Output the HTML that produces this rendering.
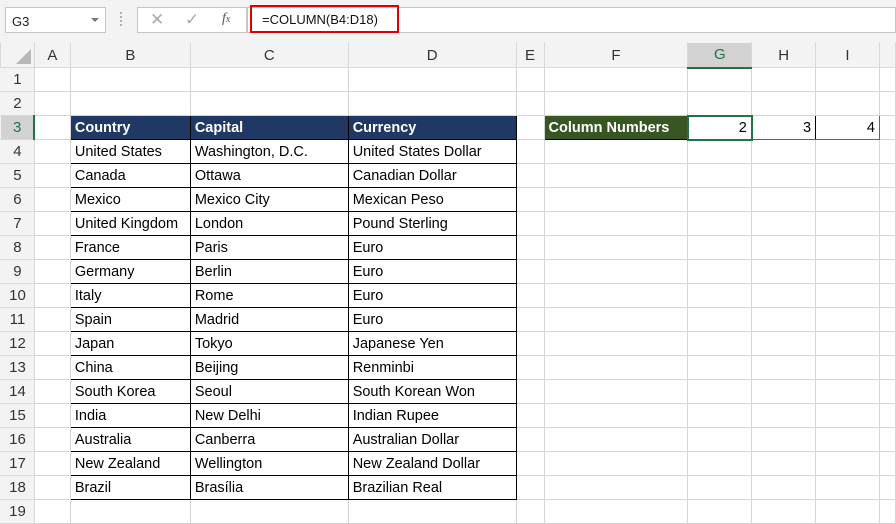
<!DOCTYPE html>
<html><head><meta charset="utf-8"><style>
*{box-sizing:border-box;margin:0;padding:0}
body{width:896px;height:521px;overflow:hidden;background:#fff;font-family:"Liberation Sans",sans-serif;position:relative}
.top{position:absolute;left:0;top:0;width:896px;height:43px;background:#f3f3f3}
.nb{position:absolute;left:5px;top:7px;width:101px;height:26px;background:#fff;border:1px solid #c6c6c6;font-size:13px;padding:6px 0 0 6px;color:#222}
.nb:after{content:"";position:absolute;right:6px;top:10px;border-left:4px solid transparent;border-right:4px solid transparent;border-top:4px solid #777}
.dots{position:absolute;left:120px;top:12px;width:2px;height:14px;border-left:2px dotted #b0b0b0}
.fx{position:absolute;left:137px;top:7px;width:110px;height:26px;background:#fff;border:1px solid #c6c6c6}
.fb{position:absolute;left:247px;top:7px;width:649px;height:26px;background:#fff;border:1px solid #c6c6c6}
.red{position:absolute;left:250px;top:5px;width:149px;height:28px;border:2px solid #e00000;font-size:13px;padding:5px 0 0 10px;color:#111}
table{position:absolute;left:0;top:42px;border-collapse:collapse;table-layout:fixed;font-size:14.5px}
td{border:1px solid #d4d4d4;height:24px;padding:0 4px;white-space:nowrap;overflow:visible;color:#000}
tr.h td{background:#f3f3f3;color:#333;text-align:center;font-size:15px;height:25px;border-color:#d8d8d8;border-top-color:#f3f3f3}
td.r{background:#f3f3f3;color:#333;text-align:center;font-size:15px;padding:0;border-color:#d8d8d8;border-left-color:#f3f3f3}
.b{border:1px solid #000}
.hd{background:#203864;color:#fff;font-weight:bold;border:1px solid #000}
.gr{background:#375623;color:#fff;font-weight:bold;border:1px solid #000}
</style></head><body>
<div class="top"></div>
<div class="nb">G3</div>
<div class="dots"></div>
<div class="fx"><span style="position:absolute;left:12px;top:2px;color:#aaa;font-size:17px">✕</span><span style="position:absolute;left:47px;top:2px;color:#aaa;font-size:17px">✓</span><span style="position:absolute;left:84px;top:3px;color:#555;font-size:14px;font-style:italic;font-family:'Liberation Serif',serif">f<span style="font-size:10px">x</span></span></div>
<div class="fb"></div>
<div class="red">=COLUMN(B4:D18)</div>
<table>
<colgroup><col style="width:34px"><col style="width:36px"><col style="width:120px"><col style="width:158px"><col style="width:168px"><col style="width:28px"><col style="width:144px"><col style="width:64px"><col style="width:64px"><col style="width:64px"><col style="width:16px"></colgroup>
<tr class="h"><td style="position:relative"><span style="position:absolute;right:3px;bottom:3px;border-left:15px solid transparent;border-bottom:15px solid #b8b8b8"></span></td><td>A</td><td>B</td><td>C</td><td>D</td><td>E</td><td>F</td><td style="background:#d2d2d2;color:#217346;border-bottom:2px solid #217346">G</td><td>H</td><td>I</td><td></td></tr>
<tr><td class="r">1</td><td></td><td></td><td></td><td></td><td></td><td></td><td></td><td></td><td></td><td></td></tr>
<tr><td class="r">2</td><td></td><td></td><td></td><td></td><td></td><td></td><td></td><td></td><td></td><td></td></tr>
<tr><td class="r" style="background:#d2d2d2;color:#217346;border-right:2px solid #217346">3</td><td></td><td class="hd">Country</td><td class="hd">Capital</td><td class="hd">Currency</td><td></td><td class="gr">Column Numbers</td><td style="text-align:right;border:2px solid #217346">2</td><td style="text-align:right;border:1px solid #2b6cc4;border-right-color:#000">3</td><td style="text-align:right;border:1px solid #2b6cc4">4</td><td></td></tr>
<tr><td class="r">4</td><td></td><td class="b">United States</td><td class="b">Washington, D.C.</td><td class="b">United States Dollar</td><td></td><td></td><td></td><td></td><td></td><td></td></tr>
<tr><td class="r">5</td><td></td><td class="b">Canada</td><td class="b">Ottawa</td><td class="b">Canadian Dollar</td><td></td><td></td><td></td><td></td><td></td><td></td></tr>
<tr><td class="r">6</td><td></td><td class="b">Mexico</td><td class="b">Mexico City</td><td class="b">Mexican Peso</td><td></td><td></td><td></td><td></td><td></td><td></td></tr>
<tr><td class="r">7</td><td></td><td class="b">United Kingdom</td><td class="b">London</td><td class="b">Pound Sterling</td><td></td><td></td><td></td><td></td><td></td><td></td></tr>
<tr><td class="r">8</td><td></td><td class="b">France</td><td class="b">Paris</td><td class="b">Euro</td><td></td><td></td><td></td><td></td><td></td><td></td></tr>
<tr><td class="r">9</td><td></td><td class="b">Germany</td><td class="b">Berlin</td><td class="b">Euro</td><td></td><td></td><td></td><td></td><td></td><td></td></tr>
<tr><td class="r">10</td><td></td><td class="b">Italy</td><td class="b">Rome</td><td class="b">Euro</td><td></td><td></td><td></td><td></td><td></td><td></td></tr>
<tr><td class="r">11</td><td></td><td class="b">Spain</td><td class="b">Madrid</td><td class="b">Euro</td><td></td><td></td><td></td><td></td><td></td><td></td></tr>
<tr><td class="r">12</td><td></td><td class="b">Japan</td><td class="b">Tokyo</td><td class="b">Japanese Yen</td><td></td><td></td><td></td><td></td><td></td><td></td></tr>
<tr><td class="r">13</td><td></td><td class="b">China</td><td class="b">Beijing</td><td class="b">Renminbi</td><td></td><td></td><td></td><td></td><td></td><td></td></tr>
<tr><td class="r">14</td><td></td><td class="b">South Korea</td><td class="b">Seoul</td><td class="b">South Korean Won</td><td></td><td></td><td></td><td></td><td></td><td></td></tr>
<tr><td class="r">15</td><td></td><td class="b">India</td><td class="b">New Delhi</td><td class="b">Indian Rupee</td><td></td><td></td><td></td><td></td><td></td><td></td></tr>
<tr><td class="r">16</td><td></td><td class="b">Australia</td><td class="b">Canberra</td><td class="b">Australian Dollar</td><td></td><td></td><td></td><td></td><td></td><td></td></tr>
<tr><td class="r">17</td><td></td><td class="b">New Zealand</td><td class="b">Wellington</td><td class="b">New Zealand Dollar</td><td></td><td></td><td></td><td></td><td></td><td></td></tr>
<tr><td class="r">18</td><td></td><td class="b">Brazil</td><td class="b">Brasília</td><td class="b">Brazilian Real</td><td></td><td></td><td></td><td></td><td></td><td></td></tr>
<tr><td class="r">19</td><td></td><td></td><td></td><td></td><td></td><td></td><td></td><td></td><td></td><td></td></tr>
</table>
</body></html>
